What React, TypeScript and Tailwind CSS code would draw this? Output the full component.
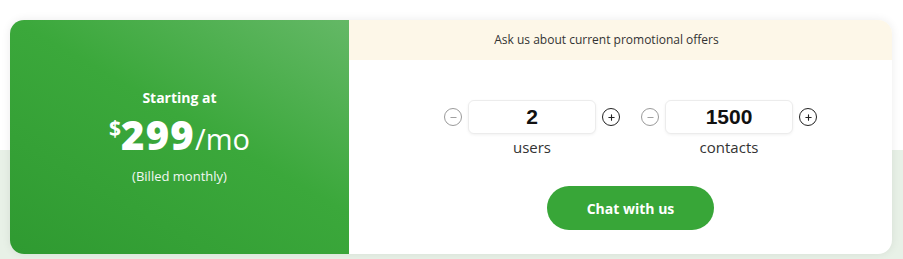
import { Minus, Plus } from 'lucide-react'

function Counter({ value, label }: { value: string; label: string }) {
  return (
    <div className="flex flex-col items-center">
      <div className="flex items-center gap-[6px]">
        <button className="w-[18px] h-[18px] rounded-full border-[1.5px] border-[#9a9a9a] flex items-center justify-center text-[#9a9a9a]">
          <Minus size={9} strokeWidth={2.5} />
        </button>
        <div className="w-[128px] h-[34px] rounded-[6px] border border-[#ececec] bg-white shadow-[0_1px_3px_rgba(0,0,0,0.06)] flex items-center justify-center font-['Liberation_Sans',Arial,sans-serif] font-bold text-[21px] text-[#111]">
          {value}
        </div>
        <button className="w-[18px] h-[18px] rounded-full border-[1.5px] border-[#222] flex items-center justify-center text-[#222]">
          <Plus size={9} strokeWidth={3} />
        </button>
      </div>
      <span className="mt-[6px] text-[15px] text-[#333] leading-none">{label}</span>
    </div>
  )
}

export default function App() {
  return (
    <div className="w-[903px] h-[259px] bg-[linear-gradient(to_bottom,#ffffff_150px,#e8f1e7_150px)] pt-[20px] pl-[10px] font-['Open_Sans',sans-serif]">
      <div className="w-[882px] h-[234px] rounded-[14px] overflow-hidden flex bg-white shadow-[0_0_10px_rgba(0,0,0,0.08)]">
        {/* price panel */}
        <div className="w-[339px] shrink-0 bg-[linear-gradient(210deg,#64b866_0%,#3ba83b_45%,#2f9a31_100%)] flex flex-col items-center justify-center text-white pb-[2px]">
          <p className="text-[14px] font-bold leading-[16px]">Starting at</p>
          <div className="flex items-baseline mt-[2px] leading-[54px]">
            <span className="self-start text-[21px] font-bold leading-[21px] mt-[10px]">$</span>
            <span className="text-[40px] font-extrabold tracking-[0.03em]">299</span>
            <span className="text-[29px] font-normal">/mo</span>
          </div>
          <p className="text-[13px] mt-[4px] leading-none text-[#f2f8f2]">(Billed monthly)</p>
        </div>

        {/* options */}
        <div className="flex-1 flex flex-col">
          <div className="h-[40px] bg-[#fdf7e8] flex items-center justify-center pr-[28px] text-[12px] text-[#333]">
            Ask us about current promotional offers
          </div>
          <div className="flex flex-col items-center pt-[40px] pl-[20px]">
            <div className="flex gap-[21px]">
              <Counter value="2" label="users" />
              <Counter value="1500" label="contacts" />
            </div>
            <button className="mt-[31px] w-[167px] h-[44px] rounded-full bg-[#38a638] text-white text-[14px] font-bold">
              Chat with us
            </button>
          </div>
        </div>
      </div>
    </div>
  )
}
